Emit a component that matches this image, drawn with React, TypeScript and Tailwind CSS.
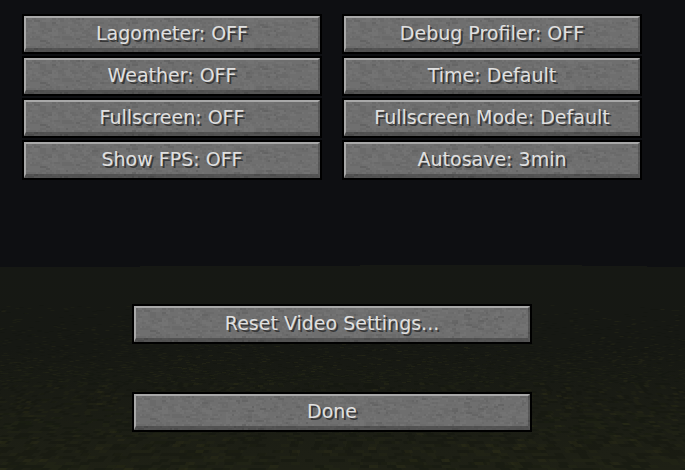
import { useId } from 'react'

const videoOptions = [
  'Lagometer: OFF',
  'Debug Profiler: OFF',
  'Weather: OFF',
  'Time: Default',
  'Fullscreen: OFF',
  'Fullscreen Mode: Default',
  'Show FPS: OFF',
  'Autosave: 3min',
]

// Seeded so the blocks look the same on every render
function createRandom(seed: number) {
  let state = seed
  return () => {
    state = (state + 0x6d2b79f5) | 0
    let t = Math.imul(state ^ (state >>> 15), 1 | state)
    t = (t + Math.imul(t ^ (t >>> 7), 61 | t)) ^ t
    return ((t ^ (t >>> 14)) >>> 0) / 4294967296
  }
}

function buildStone(seed: number, count: number) {
  const random = createRandom(seed)
  let path = ''
  for (let i = 0; i < count; i++) {
    const x = Math.floor(random() * 198) * 2
    const y = Math.floor(random() * 18) * 2
    const w = (1 + Math.floor(random() * 3)) * 2
    path += `M${x} ${y}h${w}v2h-${w}z`
  }
  return path
}

const stoneLight = buildStone(7, 650)
const stoneDark = buildStone(41, 550)
const stoneDeep = buildStone(93, 110)

// Grass blocks get bigger the closer they are to the viewer
function buildGrass(seed: number, density: number) {
  const random = createRandom(seed)
  let path = ''
  let y = 40
  while (y < 210) {
    const depth = (y - 30) / 175
    const h = Math.max(1, Math.round(depth * 3))
    const w = Math.max(4, Math.round(depth * 9))
    const shift = Math.floor(random() * w)
    for (let x = -shift; x < 685; x += w) {
      if (random() < density * depth) {
        const slant = Math.round(((x - 332) / 332) * h)
        path += `M${x} ${y}h${w}l${slant} ${h}h-${w}z`
      }
    }
    y += h
  }
  return path
}

const grassLight = buildGrass(11, 0.3)
const grassDark = buildGrass(29, 0.4)
const grassBright = buildGrass(57, 0.05)

function NightField() {
  const fade = useId()
  return (
    <div aria-hidden="true" className="absolute inset-0 flex flex-col">
      <div className="h-[265px] shrink-0 bg-[#0e0f12]" />
      <svg className="w-full grow" viewBox="0 0 685 205" preserveAspectRatio="none">
        <defs>
          <linearGradient id={fade} x1="0" y1="0" x2="0" y2="1">
            <stop offset="0" stopColor="#161814" />
            <stop offset="0.4" stopColor="#161813" />
            <stop offset="0.7" stopColor="#1a1c14" />
            <stop offset="1" stopColor="#1e2015" />
          </linearGradient>
        </defs>
        <rect width="685" height="205" fill={`url(#${fade})`} />
        <path d="M0 0h360v1h-220v1h-140zM582 0h103v2h-38v-1h-65z" fill="#0e0f12" />
        <path d={grassLight} fill="#282b18" opacity="0.3" />
        <path d={grassDark} fill="#11140c" opacity="0.3" />
        <path d={grassBright} fill="#34361a" opacity="0.3" />
      </svg>
    </div>
  )
}

function MenuButton({ label }: { label: string }) {
  return (
    <button
      type="button"
      className="relative h-10 w-full overflow-hidden border-2 border-black bg-[#6f6f6f] pb-0.5 text-[19px] leading-6 text-[#e0e0e0] [text-shadow:2px_2px_0_#383838]"
    >
      <svg
        aria-hidden="true"
        className="absolute inset-0 h-9 w-full"
        viewBox="0 0 396 36"
        preserveAspectRatio="xMinYMin slice"
        shapeRendering="crispEdges"
      >
        <path d={stoneLight} fill="#777777" opacity="0.5" />
        <path d={stoneDark} fill="#686868" opacity="0.6" />
        <path d={stoneDeep} fill="#5f5f5f" opacity="0.6" />
      </svg>
      <span className="absolute inset-0 border-t-2 border-r-2 border-b-4 border-l-2 border-t-[#a8a8a8] border-r-black/20 border-b-black/25 border-l-[#a8a8a8]" />
      <span className="relative">{label}</span>
    </button>
  )
}

export default function App() {
  return (
    <main className="relative min-h-screen bg-[#0e0f12] font-['DejaVu_Sans',sans-serif]">
      <NightField />
      <div className="relative flex flex-col pt-3.5 pr-[43px] pb-[38px] pl-[22px]">
        <div className="grid grid-cols-2 gap-x-5 gap-y-0.5">
          {videoOptions.map((label) => (
            <MenuButton key={label} label={label} />
          ))}
        </div>
        <div className="mx-auto mt-[124px] flex w-full max-w-[400px] flex-col gap-12">
          <MenuButton label="Reset Video Settings..." />
          <MenuButton label="Done" />
        </div>
      </div>
    </main>
  )
}
